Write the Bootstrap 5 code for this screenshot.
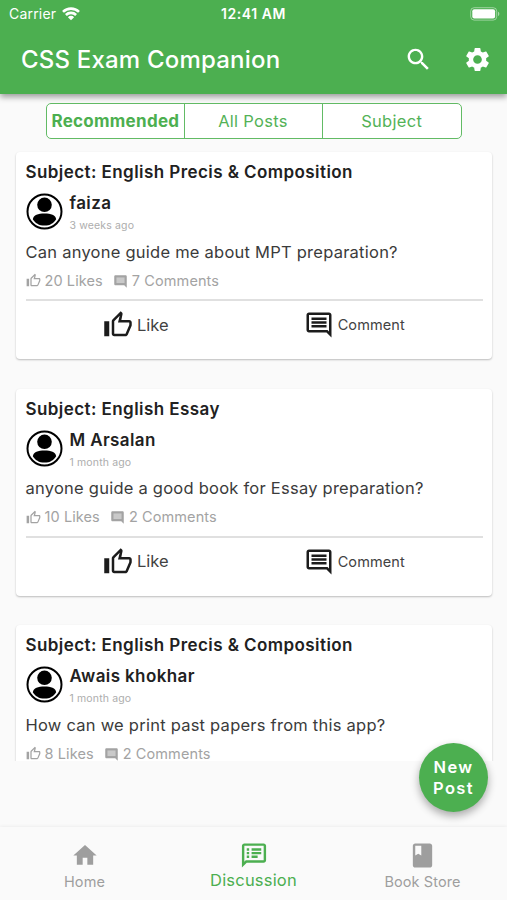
<!DOCTYPE html>
<html lang="en">
<head>
<meta charset="utf-8">
<meta name="viewport" content="width=device-width, initial-scale=1">
<title>CSS Exam Companion</title>
<link href="https://cdn.jsdelivr.net/npm/bootstrap@5.3.0/dist/css/bootstrap.min.css" rel="stylesheet">
<style>
  :root { --brand: #4caf50; }
  body { font-family: Inter, "Liberation Sans", sans-serif; background: #fafafa; color: #212121; }
  svg { display: block; fill: currentColor; flex: none; }
  .screen { width: 507px; height: 900px; overflow: hidden; position: relative; }
  .top-area { background: var(--brand); color: #fff; height: 94px; flex: none; box-shadow: 0 3px 6px rgba(0,0,0,.38); z-index: 2; }
  .status-bar { height: 28px; font-size: 14px; line-height: 28px; padding: 0 7px 0 9px; }
  .status-bar > * { flex: 1 1 0; }
  .carrier { letter-spacing: .2px; }
  .clock { font-weight: 600; font-size: 14px; letter-spacing: .55px; padding-right: 2px; white-space: nowrap; }
  .app-bar { height: 64px; padding: 0 15px 0 21px; }
  .app-bar svg { margin-top: -2px; }
  .app-bar svg + svg { margin-left: 30px; }
  .app-title { font-size: 24px; font-weight: 500; letter-spacing: .2px; line-height: 64px; }
  .segments { width: 416px; height: 36px; margin: 9px 0 0 46px; border: 1.5px solid #62bb65; border-radius: 5px; background: #fff; color: #53b257; flex: none; }
  .segments > div { flex: 1 1 0; text-align: center; line-height: 34px; font-size: 16.5px; letter-spacing: .3px; white-space: nowrap; padding-right: 1px; }
  .segments > div + div { border-left: 1.5px solid #62bb65; }
  .segments .chosen { font-weight: 700; font-size: 17px; letter-spacing: .28px; color: var(--brand); padding: 0; }
  .feed { height: 610px; margin-top: 12px; padding: 1px 15px 0 16px; overflow: hidden; flex: none; }
  .post { height: 207px; margin-bottom: 29.5px; padding: 9px 9px 0 10px; background: #fff; border-radius: 4px; box-shadow: 0 1px 2px rgba(0,0,0,.25); }
  .subject { font-size: 17px; font-weight: 600; line-height: 22px; letter-spacing: .43px; margin-left: -.5px; }
  .author { height: 37px; margin-top: 10px; gap: 7px; }
  .author-name { font-size: 17px; font-weight: 600; line-height: 22px; letter-spacing: .38px; margin-top: -1px; margin-left: -.5px; }
  .posted { font-size: 10.5px; line-height: 14px; color: #adadad; letter-spacing: .15px; margin-top: 5px; margin-left: -.5px; }
  .question { font-size: 16.5px; line-height: 22px; margin-top: 10.5px; color: #3b3b3b; letter-spacing: .24px; margin-left: -.5px; }
  .stats { height: 18px; margin-top: 9px; font-size: 14.5px; line-height: 18px; color: #a3a3a3; letter-spacing: .1px; margin-left: -.5px; }
  .stats .mini { margin: 1px 4px 0 10px; }
  .rule { height: 2px; background: #e0e0e0; margin-top: 9.5px; }
  .actions { height: 48px; margin: 0 -5px 0 5px; }
  .actions > div { flex: 1 1 0; color: #424242; }
  .actions svg { color: #1c1c1c; }
  .like { font-size: 16.5px; padding-right: 9px; }
  .comment { font-size: 14.5px; letter-spacing: .1px; padding-right: 29px; }
  .new-post { position: absolute; left: 418.5px; top: 743px; width: 69px; height: 69px; padding-left: 1px; border-radius: 50%; background: var(--brand); color: #fff; font-size: 16.5px; font-weight: 600; line-height: 20.5px; letter-spacing: 1.4px; box-shadow: 0 4px 8px rgba(0,0,0,.33); text-align: center; }
  .bottom-bar { height: 73px; margin-top: auto; background: #fafafa; box-shadow: 0 -1px 3px rgba(0,0,0,.05); flex: none; color: #9e9e9e; }
  .bottom-bar > div { flex: 1 1 0; font-size: 14.5px; letter-spacing: .1px; padding-top: 14px; }
  .bottom-bar span { line-height: 20px; margin-top: 1.5px; }
  .bottom-bar svg { height: 29px; }
  .bottom-bar .current { color: var(--brand); font-size: 16.5px; letter-spacing: .2px; }
  .bottom-bar .current span { margin-top: 0; }
</style>
</head>
<body>
<svg width="0" height="0" class="position-absolute">
  <symbol id="thumb" viewBox="0 0 24 24"><path d="M9 21h9c.83 0 1.54-.5 1.84-1.22l3.02-7.05c.09-.23.14-.47.14-.73v-2c0-1.1-.9-2-2-2h-6.31l.95-4.57.03-.32c0-.41-.17-.79-.44-1.06L14.17 1 7.58 7.59C7.22 7.95 7 8.45 7 9v10c0 1.1.9 2 2 2zM9 9l4.34-4.34L12 10h9v2l-3 7H9V9zM1 9h4v12H1z"/></symbol>
  <symbol id="bubble" viewBox="0 0 24 24"><path d="M21.99 4c0-1.1-.89-2-1.99-2H4c-1.1 0-2 .9-2 2v12c0 1.1.9 2 2 2h14l4 4-.01-18zM20 4v13.17L18.83 16H4V4h16zM6 12h12v2H6zm0-3h12v2H6zm0-3h12v2H6z"/></symbol>
  <symbol id="bubble-small" viewBox="0 0 24 24"><path d="M22 4c0-1.1-.89-2-2-2H4c-1.1 0-2 .9-2 2v12c0 1.1.9 2 2 2h14l4 4z"/><path d="M5.5 5.5h13v9h-13z" fill="#c9c9c9"/></symbol>
  <symbol id="person" viewBox="0 0 37 37"><g fill="#000"><circle cx="18.5" cy="18.5" r="17" fill="#fff" stroke="#000" stroke-width="2"/><circle cx="18.5" cy="11.8" r="7.3"/><path d="M6.800 26.200C7.500 22 12 20.400 18.500 20.400S29.500 22 30.200 26.200C28 30 24 32.600 18.500 32.600S9 30 6.800 26.200z"/></g></symbol>
</svg>
<div class="screen d-flex flex-column">
  <header class="top-area">
    <div class="status-bar d-flex align-items-center">
      <div class="d-flex align-items-center"><span class="carrier">Carrier</span>
        <svg style="margin-left:5px;margin-top:-2px" width="20" height="15" viewBox="0 0 22 16"><path d="M11 15.500 7.600 12a4.800 4.800 0 0 1 6.800 0z"/><path d="M5.400 9.600a8 8 0 0 1 11.200 0M2.200 6.200a12.600 12.600 0 0 1 17.600 0" fill="none" stroke="#fff" stroke-width="2.900"/></svg>
      </div>
      <div class="clock text-center">12:41 AM</div>
      <div class="d-flex justify-content-end">
        <svg style="margin-top:-1px" width="30" height="14" viewBox="0 0 30 14"><rect x=".7" y=".7" width="26" height="12.400" rx="3.500" fill="none" stroke="#fff" stroke-opacity=".45"/><rect x="2.300" y="2.300" width="22.800" height="9.200" rx="2"/><path d="M28 4.800c1.800.5 1.800 3.700 0 4.200z" opacity=".5"/></svg>
      </div>
    </div>
    <div class="app-bar d-flex align-items-center">
      <div class="app-title me-auto">CSS Exam Companion</div>
      <svg width="29" height="29" viewBox="0 0 24 24"><path d="M15.500 14h-.79l-.28-.27C15.410 12.590 16 11.110 16 9.500 16 5.910 13.090 3 9.500 3S3 5.910 3 9.500 5.910 16 9.500 16c1.610 0 3.090-.59 4.230-1.570l.27.28v.79l5 4.990L20.490 19l-4.990-5zm-6 0C7.010 14 5 11.990 5 9.500S7.010 5 9.500 5 14 7.010 14 9.500 11.990 14 9.500 14z"/></svg>
      <svg width="29" height="29" viewBox="0 0 24 24"><path d="M19.140 12.940c.04-.3.06-.61.06-.94 0-.32-.02-.64-.07-.94l2.030-1.580c.18-.14.23-.41.12-.61l-1.920-3.320c-.12-.22-.37-.29-.59-.22l-2.390.96c-.5-.38-1.030-.7-1.620-.94l-.36-2.540c-.04-.24-.24-.41-.48-.41h-3.840c-.24 0-.43.17-.47.41l-.36 2.540c-.59.24-1.130.57-1.620.94l-2.390-.96c-.22-.08-.47 0-.59.22L2.740 8.870c-.12.21-.08.47.12.61l2.030 1.580c-.05.3-.09.63-.09.94s.02.64.07.94l-2.030 1.580c-.18.14-.23.41-.12.61l1.920 3.320c.12.22.37.29.59.22l2.390-.96c.5.38 1.030.7 1.620.94l.36 2.540c.05.24.24.41.48.41h3.840c.24 0 .44-.17.47-.41l.36-2.540c.59-.24 1.130-.56 1.620-.94l2.390.96c.22.08.47 0 .59-.22l1.920-3.320c.12-.22.07-.47-.12-.61l-2.010-1.580zM12 15.600c-1.980 0-3.600-1.620-3.600-3.600s1.620-3.600 3.600-3.600 3.600 1.620 3.600 3.600-1.620 3.600-3.600 3.600z"/></svg>
    </div>
  </header>

  <nav class="segments d-flex">
    <div class="chosen">Recommended</div><div>All Posts</div><div>Subject</div>
  </nav>

  <main class="feed">
    <article class="post">
      <div class="subject">Subject: English Precis &amp; Composition</div>
      <div class="author d-flex"><svg width="37" height="37"><use href="#person"/></svg>
        <div><div class="author-name">faiza</div><div class="posted">3 weeks ago</div></div></div>
      <div class="question">Can anyone guide me about MPT preparation?</div>
      <div class="stats d-flex align-items-center"><svg class="me-1" width="15" height="15"><use href="#thumb"/></svg><span>20 Likes</span><svg class="mini" width="15" height="15"><use href="#bubble-small"/></svg><span>7 Comments</span></div>
      <div class="rule"></div>
      <div class="actions d-flex">
        <div class="like d-flex align-items-center justify-content-center"><svg class="me-1" width="30" height="30"><use href="#thumb"/></svg>Like</div>
        <div class="comment d-flex align-items-center justify-content-center"><svg class="me-1" width="30" height="30"><use href="#bubble"/></svg>Comment</div>
      </div>
    </article>
    <article class="post">
      <div class="subject">Subject: English Essay</div>
      <div class="author d-flex"><svg width="37" height="37"><use href="#person"/></svg>
        <div><div class="author-name">M Arsalan</div><div class="posted">1 month ago</div></div></div>
      <div class="question">anyone guide a good book for Essay preparation?</div>
      <div class="stats d-flex align-items-center"><svg class="me-1" width="15" height="15"><use href="#thumb"/></svg><span>10 Likes</span><svg class="mini" width="15" height="15"><use href="#bubble-small"/></svg><span>2 Comments</span></div>
      <div class="rule"></div>
      <div class="actions d-flex">
        <div class="like d-flex align-items-center justify-content-center"><svg class="me-1" width="30" height="30"><use href="#thumb"/></svg>Like</div>
        <div class="comment d-flex align-items-center justify-content-center"><svg class="me-1" width="30" height="30"><use href="#bubble"/></svg>Comment</div>
      </div>
    </article>
    <article class="post">
      <div class="subject">Subject: English Precis &amp; Composition</div>
      <div class="author d-flex"><svg width="37" height="37"><use href="#person"/></svg>
        <div><div class="author-name">Awais khokhar</div><div class="posted">1 month ago</div></div></div>
      <div class="question">How can we print past papers from this app?</div>
      <div class="stats d-flex align-items-center"><svg class="me-1" width="15" height="15"><use href="#thumb"/></svg><span>8 Likes</span><svg class="mini" width="15" height="15"><use href="#bubble-small"/></svg><span>2 Comments</span></div>
    </article>
  </main>

  <footer class="bottom-bar d-flex">
    <div class="d-flex flex-column align-items-center"><svg width="28" height="28" viewBox="0 0 24 24"><path d="M10 20v-6h4v6h5v-8h3L12 3 2 12h3v8z"/></svg><span>Home</span></div>
    <div class="current d-flex flex-column align-items-center"><svg width="30" height="30" viewBox="0 0 24 24"><path d="M20 2H4c-1.100 0-1.990.9-1.990 2L2 22l4-4h14c1.100 0 2-.9 2-2V4c0-1.100-.9-2-2-2zm0 14H5.170L4 17.170V4h16v12zM6 12h2v2H6zm0-3h2v2H6zm0-3h2v2H6zm4 6h5v2h-5zm0-3h8v2h-8zm0-3h8v2h-8z"/></svg><span>Discussion</span></div>
    <div class="d-flex flex-column align-items-center"><svg width="29" height="29" viewBox="0 0 24 24"><path d="M18 2H6c-1.100 0-2 .9-2 2v16c0 1.100.9 2 2 2h12c1.100 0 2-.9 2-2V4c0-1.100-.9-2-2-2zM6 4h5v8l-2.500-1.500L6 12V4z"/></svg><span>Book Store</span></div>
  </footer>
  <div class="new-post d-flex align-items-center justify-content-center">New<br>Post</div>
</div>
<script src="https://cdn.jsdelivr.net/npm/bootstrap@5.3.0/dist/js/bootstrap.bundle.min.js"></script>
</body>
</html>
